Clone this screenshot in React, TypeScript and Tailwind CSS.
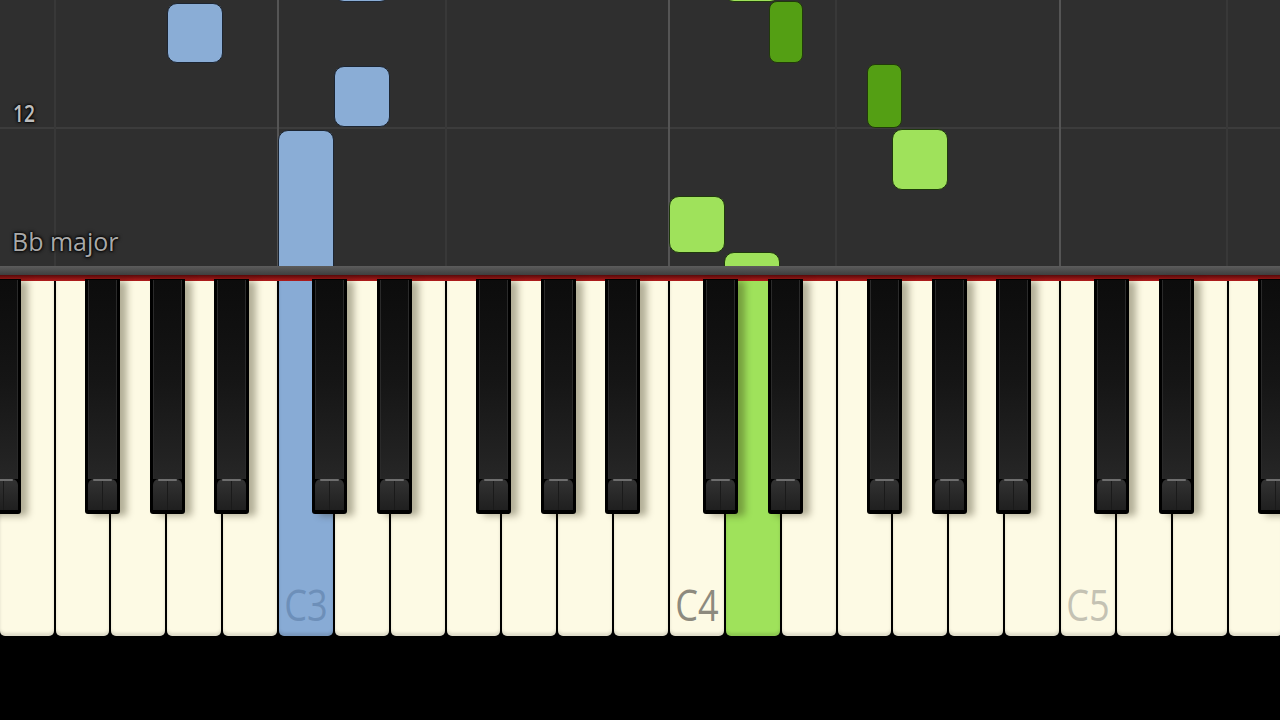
import React from "react";

const W = 55.86;
const X0 = -1.3;
const LETTERS = ["C", "D", "E", "F", "G", "A", "B"];
const BLACK_OFF: Record<string, number> = { C: -21.5, D: -12.5, F: -25, G: -16.5, A: -8.5 };

type Note = { l: number; t: number; w: number; h: number; kind: "blue" | "green" | "dark" };

const notes: Note[] = [
  { l: 334, t: -60, w: 56, h: 62, kind: "blue" },
  { l: 167, t: 3, w: 56, h: 60, kind: "blue" },
  { l: 334, t: 66, w: 56, h: 61, kind: "blue" },
  { l: 278, t: 130, w: 56, h: 170, kind: "blue" },
  { l: 724, t: -60, w: 56, h: 62, kind: "green" },
  { l: 769, t: 1, w: 34, h: 62, kind: "dark" },
  { l: 867, t: 64, w: 35, h: 64, kind: "dark" },
  { l: 892, t: 129, w: 56, h: 61, kind: "green" },
  { l: 669, t: 196, w: 56, h: 57, kind: "green" },
  { l: 724, t: 252, w: 56, h: 60, kind: "green" },
];

const noteClass: Record<Note["kind"], string> = {
  blue: "bg-[#8aadd6] border border-[#1c2532] rounded-[10px]",
  green: "bg-[#9fe25b] border border-[#1f3a0c] rounded-[10px]",
  dark: "bg-[#549f14] border border-[#213a0b] rounded-[8px]",
};

const vLines = [
  { x: 54, c: "bg-[#383838]" },
  { x: 277, c: "bg-[#555555]" },
  { x: 445, c: "bg-[#383838]" },
  { x: 668, c: "bg-[#555555]" },
  { x: 835, c: "bg-[#383838]" },
  { x: 1059, c: "bg-[#555555]" },
  { x: 1226, c: "bg-[#383838]" },
];

const whites = Array.from({ length: 23 }, (_, i) => {
  const idx = 2 + i;
  return { letter: LETTERS[idx % 7], octave: 2 + Math.floor(idx / 7) };
});

const blacks: number[] = [];
blacks.push(X0 + BLACK_OFF.D);
whites.forEach((k, i) => {
  const off = BLACK_OFF[k.letter];
  if (off !== undefined) blacks.push(X0 + (i + 1) * W + off);
});

function WhiteKey({ letter, octave }: { letter: string; octave: number }) {
  const name = letter + octave;
  let fill = "bg-[#fdfae4]";
  let label: string | null = null;
  let labelColor = "";
  if (name === "C3") {
    fill = "bg-[#88abd5]";
    label = "C3";
    labelColor = "text-[#6d8fb9]";
  } else if (name === "D4") {
    fill = "bg-[#9fe25b]";
  } else if (name === "C4") {
    label = "C4";
    labelColor = "text-[#8d8a7e]";
  } else if (name === "C5") {
    label = "C5";
    labelColor = "text-[#c4c2b3]";
  }
  return (
    <div className="w-[55.86px] shrink-0 h-full px-[1px]">
      <div
        className={`relative h-full rounded-b-[5px] ${fill} shadow-[inset_0_-3px_3px_rgba(0,0,0,0.12)]`}
      >
        {label && (
          <div
            className={`absolute left-0 right-0 bottom-[10px] text-center text-[43px] leading-none scale-x-[0.84] font-['Open_Sans',sans-serif] ${labelColor}`}
          >
            {label}
          </div>
        )}
      </div>
    </div>
  );
}

function BlackKey({ left }: { left: number }) {
  return (
    <div
      className="absolute top-[-2px] h-[235px] w-[35px] bg-black rounded-b-[3px] px-[3px] pt-[1px] pb-[4px] flex flex-col shadow-[7px_2px_7px_rgba(40,35,10,0.35)]"
      style={{ left }}
    >
      <div className="flex-1 bg-linear-to-b from-[#0c0c0c] via-[#151515] to-[#262626] border-x border-[#2a2a2a]" />
      <div className="relative h-[31px] bg-linear-to-b from-[#333333] to-[#1f1f1f] rounded-t-[6px] flex">
        <div className="absolute left-[5px] right-[5px] top-0 h-[2px] rounded-full bg-[#6e6e6e]" />
        <div className="flex-1 border-r border-[#1a1a1a]" />
        <div className="flex-1" />
      </div>
    </div>
  );
}

export default function App() {
  return (
    <div className="w-[1280px] h-[720px] bg-black overflow-hidden flex flex-col font-['Open_Sans',sans-serif]">
      <div className="relative h-[266px] shrink-0 bg-[#2f2f2f] overflow-hidden">
        <div className="absolute left-0 right-0 top-[127px] h-[2px] bg-[#3c3c3c]" />
        {vLines.map((v) => (
          <div key={v.x} className={`absolute top-0 bottom-0 w-[2px] ${v.c}`} style={{ left: v.x }} />
        ))}
        {notes.map((n, i) => (
          <div
            key={i}
            className={`absolute ${noteClass[n.kind]}`}
            style={{ left: n.l, top: n.t, width: n.w, height: n.h }}
          />
        ))}
        <div className="absolute left-[13px] top-[101px] text-[24px] font-semibold leading-none text-[#bdbdbd] origin-left scale-x-[0.8] [text-shadow:0_0_4px_#000,0_0_3px_#000,0_0_2px_#000]">
          12
        </div>
        <div className="absolute left-[12px] top-[229px] text-[25px] leading-none text-[#a9a9a9] [text-shadow:0_0_4px_#000,0_0_3px_#000,0_0_2px_#000]">
          Bb major
        </div>
      </div>

      <div className="h-[9px] shrink-0 bg-linear-to-b from-[#5c5c5c] to-[#3f3f3f]" />
      <div className="h-[6px] shrink-0 bg-linear-to-b from-[#5a0a0a] to-[#b21c1c]" />

      <div className="relative h-[355px] shrink-0 bg-black">
        <div className="flex h-full ml-[-1.3px]">
          {whites.map((k, i) => (
            <WhiteKey key={i} letter={k.letter} octave={k.octave} />
          ))}
        </div>
        {blacks.map((l, i) => (
          <BlackKey key={i} left={l} />
        ))}
      </div>

      <div className="flex-1 bg-black" />
    </div>
  );
}
